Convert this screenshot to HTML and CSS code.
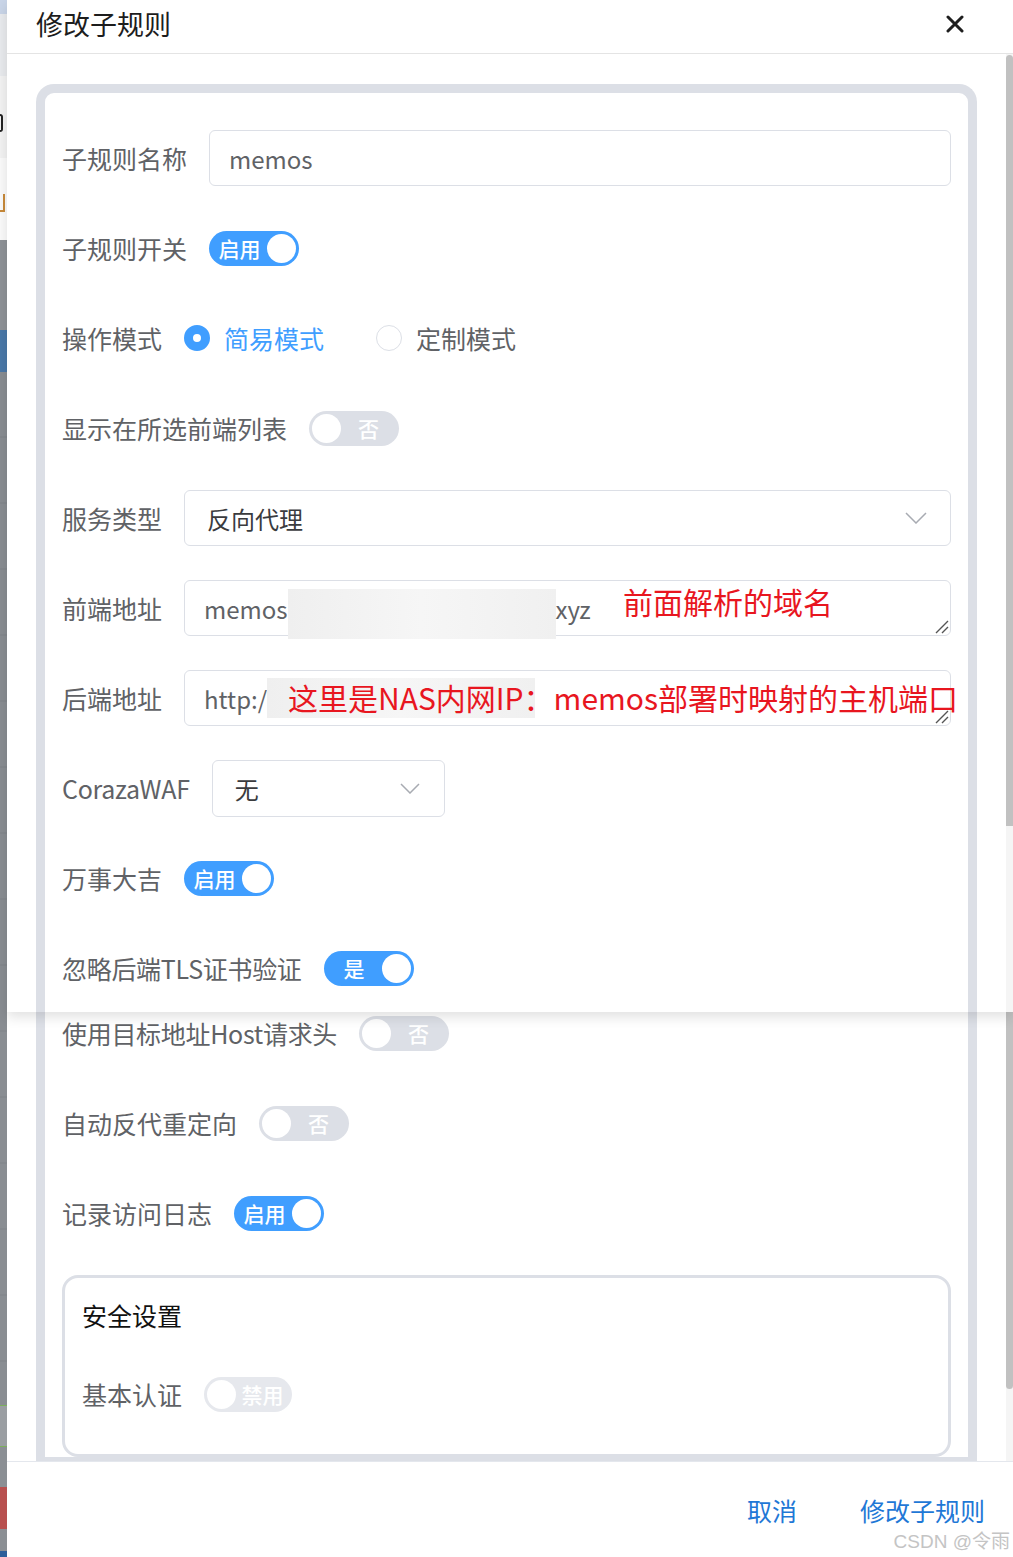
FILE: index.html
```html
<!DOCTYPE html>
<html lang="zh-CN">
  <head>
    <meta charset="utf-8">
    <meta name="viewport" content="width=device-width, initial-scale=1">
    <title>修改子规则</title>
    <link rel="stylesheet" href="styles.css">
  </head>
  <body>
    <div class='page'>
        <div class='backdrop'>
            <div class='bd bd-blue-top'></div>
            <div class='bd bd-light'></div>
            <div class='bd bd-white'><span class='bd-mark'></span></div>
            <div class='bd bd-white2'><span class='bd-mark orange'></span></div>
            <div class='bd bd-grey'></div>
            <div class='bd bd-blue'></div>
            <div class='bd bd-grey-long'></div>
            <div class='bd bd-green'></div>
            <div class='bd bd-grey2'></div>
            <div class='bd bd-red'></div>
            <div class='bd bd-grey3'></div>
        </div>
        <div class='dialog'>
            <div class='shot shot-top'>
                <div class='dialog-header'>
                    <span class='dialog-title'>修改子规则</span>
                    <span class='dialog-close'>
                        <svg width="18" height="18" viewBox="0 0 18 18"><path d="M2 2 L16 16 M16 2 L2 16" stroke="#1f1f1f" stroke-width="3" stroke-linecap="round"/></svg>
                    </span>
                </div>
                <div class='scroll-area'>
                    <div class='scroll-content'>
                        <div class='panel panel-top'>
                            <div class='form-item'>
                                <span class='label'>子规则名称</span>
                                <div class='input'>memos</div>
                            </div>
                            <div class='form-item'>
                                <span class='label'>子规则开关</span>
                                <span class='switch on'><span class='switch-text'>启用</span><span class='switch-knob'></span></span>
                            </div>
                            <div class='form-item'>
                                <span class='label'>操作模式</span>
                                <span class='radio checked'><span class='radio-dot'></span><span class='radio-label'>简易模式</span></span>
                                <span class='radio'><span class='radio-dot'></span><span class='radio-label'>定制模式</span></span>
                            </div>
                            <div class='form-item'>
                                <span class='label'>显示在所选前端列表</span>
                                <span class='switch'><span class='switch-knob'></span><span class='switch-text'>否</span></span>
                            </div>
                            <div class='form-item'>
                                <span class='label'>服务类型</span>
                                <div class='input select'>
                                    <span class='select-value'>反向代理</span>
                                    <svg class='chevron' width="22" height="12" viewBox="0 0 22 12"><polyline points="1,1 11,11 21,1" fill="none" stroke="#a8abb2" stroke-width="1.5"/></svg>
                                </div>
                            </div>
                            <div class='form-item'>
                                <span class='label'>前端地址</span>
                                <div class='input textarea'>
                                    <span>memos</span><span class='redact redact-front'></span><span>xyz</span>
                                    <span class='note note-front'>前面解析的域名</span>
                                    <svg class='resize' width="14" height="14" viewBox="0 0 14 14"><path d="M1 13 L13 1 M7 13 L13 7" stroke="#555" stroke-width="1.4"/></svg>
                                </div>
                            </div>
                            <div class='form-item'>
                                <span class='label'>后端地址</span>
                                <div class='input textarea'>
                                    <span>http:/</span><span class='redact redact-back'></span>
                                    <span class='note note-back'>这里是NAS内网IP：memos部署时映射的主机端口</span>
                                    <svg class='resize' width="14" height="14" viewBox="0 0 14 14"><path d="M1 13 L13 1 M7 13 L13 7" stroke="#555" stroke-width="1.4"/></svg>
                                </div>
                            </div>
                            <div class='form-item'>
                                <span class='label latin'>CorazaWAF</span>
                                <div class='input select select-small'>
                                    <span class='select-value'>无</span>
                                    <svg class='chevron' width="20" height="11" viewBox="0 0 20 11"><polyline points="1,1 10,10 19,1" fill="none" stroke="#a8abb2" stroke-width="1.5"/></svg>
                                </div>
                            </div>
                            <div class='form-item'>
                                <span class='label'>万事大吉</span>
                                <span class='switch on'><span class='switch-text'>启用</span><span class='switch-knob'></span></span>
                            </div>
                            <div class='form-item'>
                                <span class='label latin'>忽略后端TLS证书验证</span>
                                <span class='switch on'><span class='switch-text'>是</span><span class='switch-knob'></span></span>
                            </div>
                        </div>
                    </div>
                    <div class='scrollbar'><div class='thumb thumb-top'></div></div>
                </div>
            </div>
            <div class='shot shot-bottom'>
                <div class='scroll-area scroll-bottom'>
                    <div class='scroll-content'>
                        <div class='panel panel-bottom'>
                            <div class='form-item first-cut'>
                                <span class='label latin'>使用目标地址Host请求头</span>
                                <span class='switch'><span class='switch-knob'></span><span class='switch-text'>否</span></span>
                            </div>
                            <div class='form-item'>
                                <span class='label'>自动反代重定向</span>
                                <span class='switch'><span class='switch-knob'></span><span class='switch-text'>否</span></span>
                            </div>
                            <div class='form-item'>
                                <span class='label'>记录访问日志</span>
                                <span class='switch on'><span class='switch-text'>启用</span><span class='switch-knob'></span></span>
                            </div>
                            <div class='security'>
                                <div class='security-title'>安全设置</div>
                                <div class='form-item'>
                                    <span class='label'>基本认证</span>
                                    <span class='switch disabled'><span class='switch-knob'></span><span class='switch-text'>禁用</span></span>
                                </div>
                            </div>
                        </div>
                    </div>
                    <div class='scrollbar'><div class='thumb thumb-bottom'></div></div>
                </div>
                <div class='dialog-footer'>
                    <span class='btn-text'>取消</span>
                    <span class='btn-text'>修改子规则</span>
                    <span class='watermark'>CSDN @令雨</span>
                </div>
            </div>
        </div>
    </div>
  </body>
</html>
```

FILE: styles.css
```css
body {
    margin: 0;
    background-color: #ffffff;
    font-family: "Noto Sans CJK SC", "Noto Sans", sans-serif;
}
.page {
    display: flex;
    width: 1013px;
    height: 1557px;
    overflow: hidden;
}
.backdrop {
    width: 7px;
    display: flex;
    flex-direction: column;
    background-color: #2d5f9a;
}
.bd {
    overflow: hidden;
}
.bd-blue-top { height: 14px; background-color: #c9d5e8; }
.bd-light { height: 62px; background-color: #e9ebee; }
.bd-white { height: 82px; background-color: #f3f3f3; padding-top: 38px; box-sizing: border-box; }
.bd-white2 { height: 82px; background-color: #fbfbfb; padding-top: 36px; box-sizing: border-box; }
.bd-mark {
    display: block;
    width: 3px;
    height: 18px;
    border: 2px solid #222;
    border-left: none;
    border-radius: 0 6px 6px 0;
    box-sizing: border-box;
}
.bd-mark.orange {
    width: 5px;
    border: none;
    border-right: 2px solid #c98a3a;
    border-bottom: 2px solid #c98a3a;
    border-radius: 0;
}
.bd-grey { height: 90px; background-color: #8e9297; }
.bd-blue { height: 42px; background-color: #4a78a8; }
.bd-grey-long { height: 1033px; background: repeating-linear-gradient(#898d92 0, #898d92 64px, #7f8388 65px, #898d92 66px); }
.bd-green { height: 40px; background-color: #9a9ea2; border-top: 1px solid #7caf5c; border-bottom: 1px solid #7caf5c; }
.bd-grey2 { height: 40px; background-color: #8b8f94; }
.bd-red { height: 42px; background-color: #b8504f; }
.bd-grey3 { height: 22px; background-color: #8b8f94; }
.dialog {
    flex: 1;
    display: flex;
    flex-direction: column;
    background-color: #fff;
}
.shot {
    display: flex;
    flex-direction: column;
    background-color: #fff;
}
.shot-top {
    height: 1012px;
    position: relative;
    z-index: 2;
    box-shadow: 0 5px 12px rgba(0,0,0,0.12);
}
.shot-bottom {
    flex: 1;
    border-bottom-left-radius: 8px;
    overflow: hidden;
}
.dialog-header {
    height: 53px;
    border-bottom: 1px solid #e4e4e4;
    display: flex;
    align-items: center;
    justify-content: space-between;
    padding: 0 49px 0 29px;
}
.dialog-title {
    font-size: 27px;
    color: #1d1d1d;
    margin-top: -6px;
}
.dialog-close {
    display: flex;
    margin-top: -5px;
}
.scroll-area {
    flex: 1;
    display: flex;
    overflow: hidden;
}
.scroll-content {
    flex: 1;
    display: flex;
    flex-direction: column;
    padding: 0 29px;
    overflow: hidden;
}
.scrollbar {
    width: 7px;
    background-color: #f5f5f5;
}
.thumb {
    background-color: #c1c1c1;
}
.thumb-top {
    height: 771px;
    margin-top: 1px;
    border-radius: 4px 4px 0 0;
}
.thumb-bottom {
    height: 377px;
    border-radius: 0 0 4px 4px;
}
.panel {
    flex: 1;
    border: 9px solid #dcdfe6;
    padding: 0 17px;
    display: flex;
    flex-direction: column;
    gap: 34px;
}
.panel-top {
    margin-top: 30px;
    border-bottom: none;
    border-radius: 18px 18px 0 0;
    padding-top: 37px;
}
.panel-bottom {
    border-top: none;
}
.form-item {
    height: 56px;
    flex-shrink: 0;
    display: flex;
    align-items: center;
    gap: 22px;
}
.first-cut {
    margin-top: -7px;
}
.label {
    font-size: 25px;
    color: #606266;
    white-space: nowrap;
}
.label.latin {
    letter-spacing: -0.3px;
}
.input {
    flex: 1;
    height: 56px;
    box-sizing: border-box;
    border: 1px solid #dcdfe6;
    border-radius: 6px;
    padding: 0 19px;
    display: flex;
    align-items: center;
    font-size: 24px;
    color: #606266;
    position: relative;
}
.select {
    justify-content: space-between;
    padding: 0 23px 0 22px;
}
.select-value {
    color: #3a3b3e;
}
.select-small {
    flex: none;
    width: 233px;
    height: 57px;
    padding-right: 24px;
}
.chevron {
    display: block;
}
.textarea {
    padding-left: 19px;
    overflow: visible;
}
.redact {
    display: inline-block;
    height: 50px;
    margin-top: 12px;
    background: linear-gradient(90deg, #efefef, #f6f6f6 50%, #f0f0f0);
}
.redact-front {
    width: 268px;
}
.redact-back {
    width: 268px;
    height: 40px;
    margin-top: 0;
}
.note {
    position: absolute;
    font-size: 30px;
    color: #e8161f;
    white-space: nowrap;
    line-height: 36px;
}
.note-front {
    left: 438px;
    top: 2px;
}
.note-back {
    left: 103px;
    top: 8px;
}
.resize {
    position: absolute;
    right: 1px;
    bottom: 1px;
}
.switch {
    display: inline-flex;
    align-items: center;
    width: 90px;
    height: 35px;
    box-sizing: border-box;
    padding: 3px;
    border-radius: 18px;
    background-color: #dcdfe6;
}
.switch.on {
    background-color: #409eff;
}
.switch-text {
    flex: 1;
    text-align: center;
    color: #fff;
    font-size: 21px;
    line-height: 29px;
    font-weight: 500;
}
.switch-knob {
    width: 29px;
    height: 29px;
    border-radius: 50%;
    background-color: #fff;
}
.switch.disabled {
    width: 88px;
    opacity: 0.7;
}
.radio {
    display: inline-flex;
    align-items: center;
    gap: 14px;
    margin-right: 30px;
}
.radio-dot {
    width: 26px;
    height: 26px;
    box-sizing: border-box;
    border-radius: 50%;
    border: 1px solid #dcdfe6;
    background-color: #fff;
}
.radio.checked .radio-dot {
    border: 9px solid #409eff;
}
.radio-label {
    font-size: 25px;
    color: #606266;
}
.radio.checked .radio-label {
    color: #409eff;
}
.security {
    flex-shrink: 0;
    border: 3px solid #dcdfe6;
    border-radius: 16px;
    padding: 17px 17px 32px;
    display: flex;
    flex-direction: column;
    gap: 31px;
}
.security-title {
    font-size: 25px;
    color: #111;
    line-height: 40px;
}
.dialog-footer {
    height: 95px;
    border-top: 1px solid #e4e7ed;
    display: flex;
    align-items: center;
    justify-content: flex-end;
    gap: 63px;
    padding-right: 28px;
    position: relative;
}
.btn-text {
    font-size: 25px;
    color: #1f78d6;
}
.watermark {
    position: absolute;
    right: 3px;
    bottom: 4px;
    font-size: 19px;
    color: #c4c4c4;
    font-family: "Liberation Sans", "Noto Sans CJK SC", sans-serif;
}
```
